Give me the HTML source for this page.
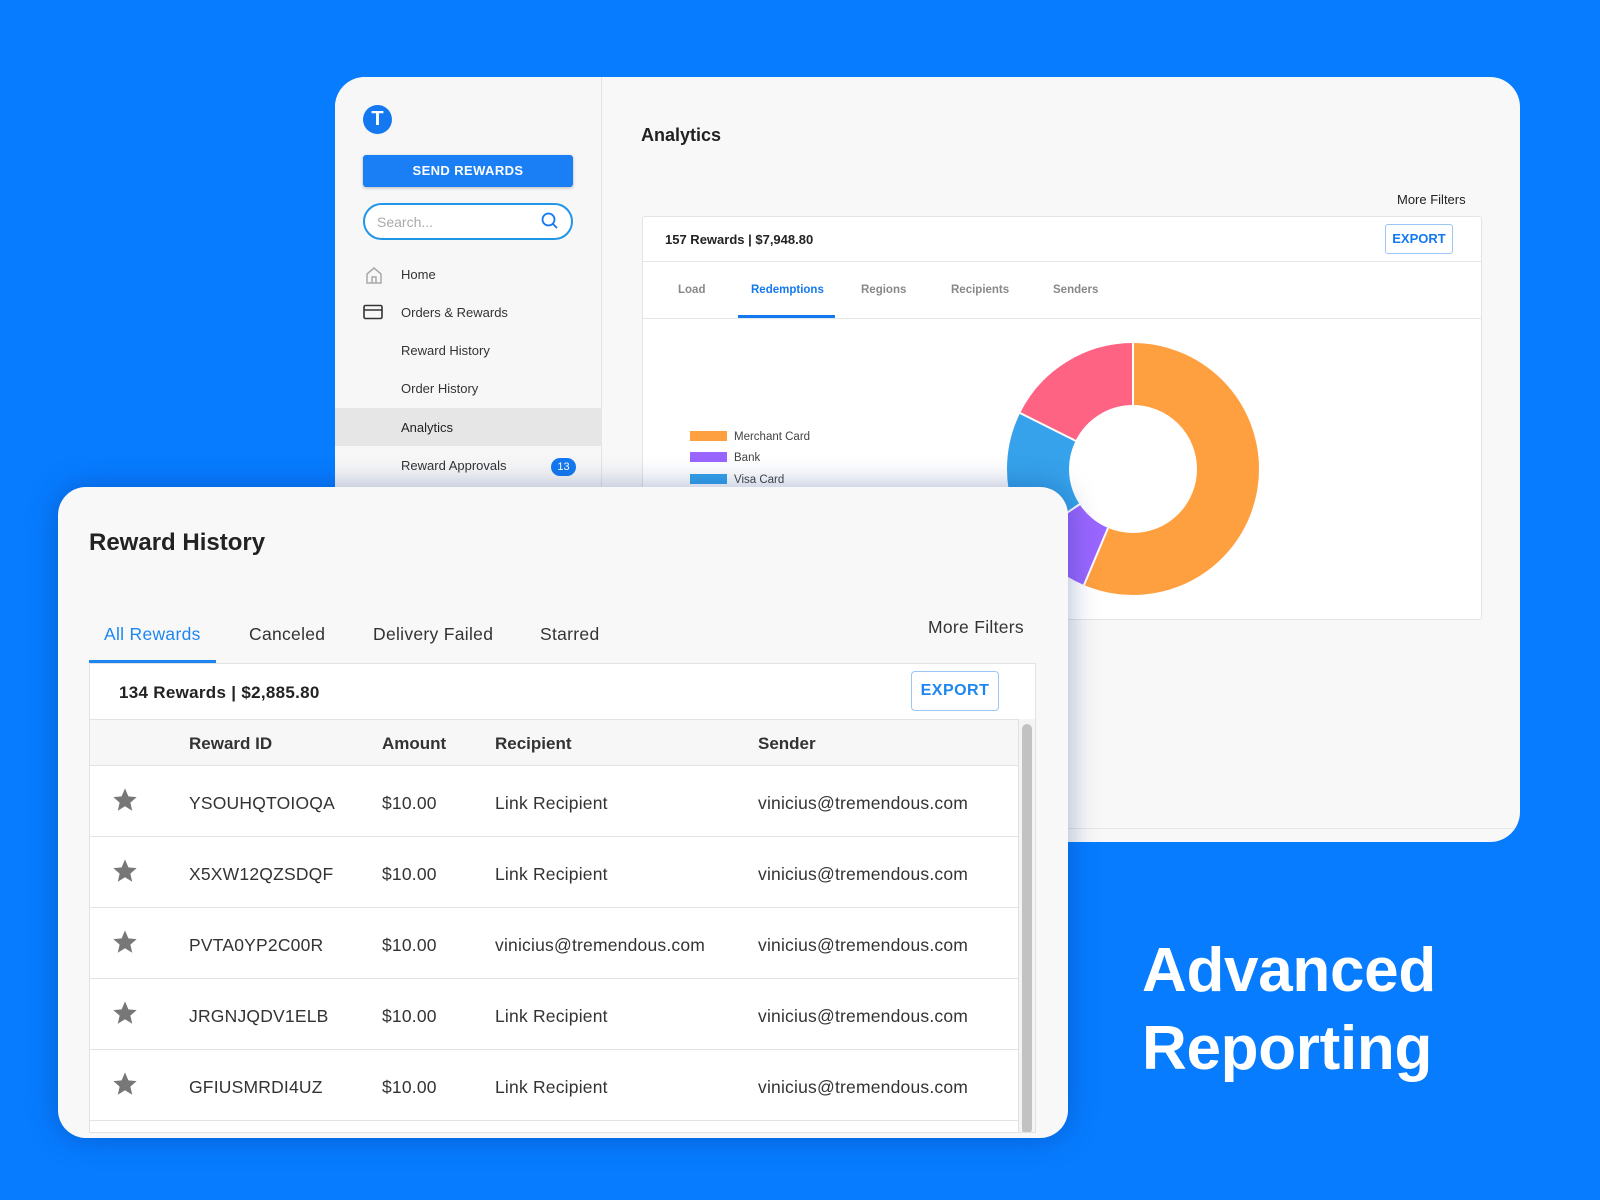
<!DOCTYPE html>
<html><head><meta charset="utf-8"><style>
*{box-sizing:border-box;margin:0;padding:0}
body{width:1600px;height:1200px;background:#077cff;font-family:"Liberation Sans",Arial,sans-serif;position:relative;overflow:hidden;color:#222}
.abs{position:absolute}
#back{left:335px;top:77px;width:1185px;height:765px;background:#f8f8f8;border-radius:30px;overflow:hidden}
#side{left:0;top:0;width:267px;height:765px;background:#f7f7f7;border-right:1px solid #e4e4e4}
.nav{position:absolute;left:66px;font-size:13px;color:#333}
#front{left:58px;top:487px;width:1010px;height:651px;background:#f8f8f8;border-radius:28px;box-shadow:0 0 30px rgba(0,40,120,.35);overflow:hidden}
.tab{position:absolute;top:137px;font-size:17.5px;color:#333;letter-spacing:.3px}
.row{position:absolute;left:0;width:928px;height:70px;border-top:1px solid #e2e2e2;background:#fff;font-size:17.5px;color:#333;letter-spacing:.2px}
.row span{position:absolute;top:27px}
.star{position:absolute;left:21px;top:20px;width:28px;height:28px}
</style></head><body>

<div id="back" class="abs">
  <div id="side" class="abs">
    <div class="abs" style="left:28px;top:28px;width:29px;height:29px;border-radius:50%;background:#1479f0;color:#fff;font-weight:bold;font-size:20px;text-align:center;line-height:29px">T</div>
    <div class="abs" style="left:28px;top:78px;width:210px;height:32px;background:#1a7ef5;border-radius:3px;color:#fff;font-size:13px;font-weight:bold;text-align:center;line-height:32px;letter-spacing:.4px;box-shadow:0 1px 3px rgba(0,0,0,.25)">SEND REWARDS</div>
    <div class="abs" style="left:28px;top:126px;width:210px;height:37px;background:#fff;border:2px solid #2196e8;border-radius:19px;font-size:14px;color:#aaa;padding:9px 0 0 12px">Search...</div>
    <svg class="abs" style="left:205px;top:134px" width="20" height="20" viewBox="0 0 20 20"><circle cx="8.5" cy="8.5" r="6" fill="none" stroke="#1479f0" stroke-width="1.8"/><path d="M13 13l4 4" stroke="#1479f0" stroke-width="1.8"/></svg>
    <svg class="abs" style="left:29px;top:188px" width="20" height="20" viewBox="0 0 20 20"><path d="M3 9l7-6 7 6v9H3z M8 18v-6h4v6" fill="none" stroke="#aaa" stroke-width="1.5"/></svg>
    <div class="nav" style="top:190px">Home</div>
    <svg class="abs" style="left:28px;top:227px" width="20" height="16" viewBox="0 0 20 16"><rect x="1" y="1.5" width="18" height="13" rx="1.5" fill="none" stroke="#333" stroke-width="1.6"/><path d="M1 6h18" stroke="#333" stroke-width="1.6"/></svg>
    <div class="nav" style="top:228px">Orders &amp; Rewards</div>
    <div class="nav" style="top:266px">Reward History</div>
    <div class="nav" style="top:304px">Order History</div>
    <div class="abs" style="left:0;top:331px;width:267px;height:38px;background:#e6e6e6"></div>
    <div class="nav" style="top:343px;color:#222">Analytics</div>
    <div class="nav" style="top:381px">Reward Approvals</div>
    <div class="abs" style="left:216px;top:381px;width:25px;height:18px;border-radius:9px;background:#1479f0;color:#fff;font-size:11px;text-align:center;line-height:18px">13</div>
  </div>
  <div class="abs" style="left:306px;top:48px;font-size:18px;font-weight:bold;color:#222">Analytics</div>
  <div class="abs" style="left:1062px;top:115px;font-size:13px;color:#222">More Filters</div>
  <div class="abs" style="left:307px;top:139px;width:840px;height:404px;background:#fff;border:1px solid #e4e4e4;border-radius:3px">
    <div class="abs" style="left:22px;top:15px;font-size:13px;font-weight:bold;color:#222">157 Rewards | $7,948.80</div>
    <div class="abs" style="left:742px;top:7px;width:68px;height:30px;border:1px solid #9cc6f5;border-radius:3px;color:#1479f0;font-size:13px;font-weight:bold;text-align:center;line-height:28px">EXPORT</div>
    <div class="abs" style="left:0;top:44px;width:838px;height:1px;background:#e6e6e6"></div>
    <div class="abs" style="left:35px;top:67px;font-size:11.5px;color:#888;font-weight:bold">Load</div>
    <div class="abs" style="left:108px;top:67px;font-size:11.5px;color:#1479f0;font-weight:bold">Redemptions</div>
    <div class="abs" style="left:218px;top:67px;font-size:11.5px;color:#888;font-weight:bold">Regions</div>
    <div class="abs" style="left:308px;top:67px;font-size:11.5px;color:#888;font-weight:bold">Recipients</div>
    <div class="abs" style="left:410px;top:67px;font-size:11.5px;color:#888;font-weight:bold">Senders</div>
    <div class="abs" style="left:95px;top:98px;width:97px;height:4px;background:#1479f0"></div>
    <div class="abs" style="left:0;top:101px;width:838px;height:1px;background:#e6e6e6"></div>
    <div class="abs" style="left:47px;top:214px;width:37px;height:10px;background:#ffa040"></div>
    <div class="abs" style="left:91px;top:214px;font-size:11.5px;color:#444">Merchant Card</div>
    <div class="abs" style="left:47px;top:235px;width:37px;height:10px;background:#9966ff"></div>
    <div class="abs" style="left:91px;top:235px;font-size:11.5px;color:#444">Bank</div>
    <div class="abs" style="left:47px;top:257px;width:37px;height:10px;background:#36a2eb"></div>
    <div class="abs" style="left:91px;top:257px;font-size:11.5px;color:#444">Visa Card</div>
  </div>
  <div class="abs" style="left:0;top:751px;width:1185px;height:1px;background:#e6e6e6"></div>
</div>

<svg class="abs" style="left:1007px;top:343px" width="252" height="252" viewBox="0 0 252 252">
  <g transform="rotate(-90 126 126)" fill="none" stroke-width="62">
    <circle cx="126" cy="126" r="95" stroke="#ffa040" stroke-dasharray="336.6 600"/>
    <circle cx="126" cy="126" r="95" stroke="#9966ff" stroke-dasharray="0 336.6 54.7 600"/>
    <circle cx="126" cy="126" r="95" stroke="#36a2eb" stroke-dasharray="0 391.3 99.5 600"/>
    <circle cx="126" cy="126" r="95" stroke="#ff6384" stroke-dasharray="0 490.8 106.1 600"/>
  </g>
  <g stroke="#fff" stroke-width="2">
    <path d="M126 0V62"/>
    <path d="M101 185L77 242"/>
    <path d="M73 161L21 196"/>
    <path d="M69 98L13 70"/>
  </g>
</svg>

<div id="front" class="abs">
  <div class="abs" style="left:31px;top:42px;font-size:24px;font-weight:bold;color:#222">Reward History</div>
  <div class="tab" style="left:46px;color:#1e86f0">All Rewards</div>
  <div class="tab" style="left:191px">Canceled</div>
  <div class="tab" style="left:315px">Delivery Failed</div>
  <div class="tab" style="left:482px">Starred</div>
  <div class="tab" style="left:870px;top:130px">More Filters</div>
  <div class="abs" style="left:31px;top:173px;width:127px;height:3px;background:#1e86f0"></div>
  <div class="abs" style="left:31px;top:176px;width:947px;height:470px;background:#fff;border:1px solid #e2e2e2;overflow:hidden">
    <div class="abs" style="left:29px;top:19px;font-size:17px;font-weight:bold;color:#222;letter-spacing:.3px">134 Rewards | $2,885.80</div>
    <div class="abs" style="left:821px;top:7px;width:88px;height:40px;border:1px solid #9cc6f5;border-radius:4px;color:#1e86f0;font-size:16px;font-weight:bold;text-align:center;line-height:38px;letter-spacing:.5px">EXPORT</div>
    <div class="abs" style="left:0;top:55px;width:928px;height:46px;background:#f7f7f7;border-top:1px solid #e2e2e2;font-size:17px;font-weight:bold;color:#333">
      <span class="abs" style="left:99px;top:14px">Reward ID</span>
      <span class="abs" style="left:292px;top:14px">Amount</span>
      <span class="abs" style="left:405px;top:14px">Recipient</span>
      <span class="abs" style="left:668px;top:14px">Sender</span>
    </div>
    <div class="row" style="top:101px"><svg class="star" viewBox="0 0 24 24"><path d="M12 2l2.9 6.9 7.1.6-5.4 4.7 1.6 7L12 17.4 5.8 21.2l1.6-7L2 9.5l7.1-.6z" fill="#777"/></svg><span style="left:99px">YSOUHQTOIOQA</span><span style="left:292px">$10.00</span><span style="left:405px">Link Recipient</span><span style="left:668px">vinicius@tremendous.com</span></div>
    <div class="row" style="top:172px"><svg class="star" viewBox="0 0 24 24"><path d="M12 2l2.9 6.9 7.1.6-5.4 4.7 1.6 7L12 17.4 5.8 21.2l1.6-7L2 9.5l7.1-.6z" fill="#777"/></svg><span style="left:99px">X5XW12QZSDQF</span><span style="left:292px">$10.00</span><span style="left:405px">Link Recipient</span><span style="left:668px">vinicius@tremendous.com</span></div>
    <div class="row" style="top:243px"><svg class="star" viewBox="0 0 24 24"><path d="M12 2l2.9 6.9 7.1.6-5.4 4.7 1.6 7L12 17.4 5.8 21.2l1.6-7L2 9.5l7.1-.6z" fill="#777"/></svg><span style="left:99px">PVTA0YP2C00R</span><span style="left:292px">$10.00</span><span style="left:405px">vinicius@tremendous.com</span><span style="left:668px">vinicius@tremendous.com</span></div>
    <div class="row" style="top:314px"><svg class="star" viewBox="0 0 24 24"><path d="M12 2l2.9 6.9 7.1.6-5.4 4.7 1.6 7L12 17.4 5.8 21.2l1.6-7L2 9.5l7.1-.6z" fill="#777"/></svg><span style="left:99px">JRGNJQDV1ELB</span><span style="left:292px">$10.00</span><span style="left:405px">Link Recipient</span><span style="left:668px">vinicius@tremendous.com</span></div>
    <div class="row" style="top:385px"><svg class="star" viewBox="0 0 24 24"><path d="M12 2l2.9 6.9 7.1.6-5.4 4.7 1.6 7L12 17.4 5.8 21.2l1.6-7L2 9.5l7.1-.6z" fill="#777"/></svg><span style="left:99px">GFIUSMRDI4UZ</span><span style="left:292px">$10.00</span><span style="left:405px">Link Recipient</span><span style="left:668px">vinicius@tremendous.com</span></div>
    <div class="row" style="top:456px"></div>
    <div class="abs" style="left:928px;top:55px;width:18px;height:420px;background:#f4f4f4;border-left:1px solid #e2e2e2"></div>
    <div class="abs" style="left:932px;top:60px;width:10px;height:410px;background:#c2c2c2;border-radius:5px"></div>
  </div>
</div>

<div class="abs" style="left:1142px;top:932px;font-size:62px;font-weight:bold;color:#fff;line-height:78px;letter-spacing:-.3px">Advanced<br>Reporting</div>
</body></html>
